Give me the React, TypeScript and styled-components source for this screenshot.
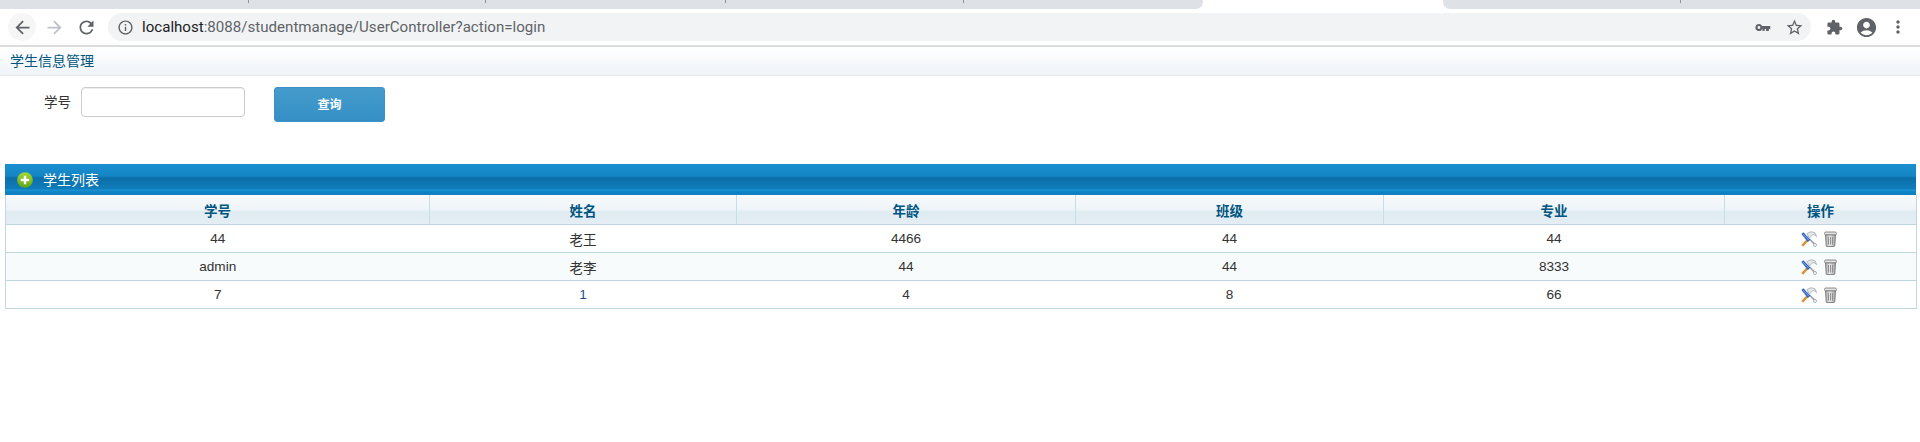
import React from 'react';
import styled, { createGlobalStyle } from 'styled-components';
import {
    MdArrowBack,
    MdArrowForward,
    MdRefresh,
    MdInfoOutline,
    MdStarBorder,
    MdExtension,
    MdAccountCircle,
    MdMoreVert,
} from 'react-icons/md';

const GlobalStyle = createGlobalStyle`
    html, body { margin: 0; padding: 0; background: #fff; }
    body { font-family: "Liberation Sans", Arial, "Noto Sans CJK SC", sans-serif; font-size: 13px; color: #333; }
`;

const TabStrip = styled.div`
    display: flex;
    justify-content: space-between;
    height: 9px;
    background: #fff;
`;

const TabGroup = styled.div<{ $w: number; $side: 'left' | 'right' }>`
    width: ${p => p.$w}px;
    display: flex;
    background: #dee1e6;
    border-radius: ${p => (p.$side === 'left' ? '0 0 7px 0' : '0 0 0 7px')};
`;

const TabSlot = styled.div<{ $w: number }>`
    width: ${p => p.$w}px;
    flex: none;
    height: 3px;
    box-sizing: border-box;
    border-right: 1px solid #8f9296;
`;

const Toolbar = styled.div`
    display: flex;
    align-items: center;
    height: 36px;
    padding: 0 6px 0 8px;
    border-bottom: 2px solid #dadce0;
    background: #fff;
`;

const NavButton = styled.div<{ $hover?: boolean; $off?: boolean }>`
    width: 28px;
    height: 28px;
    display: flex;
    align-items: center;
    justify-content: center;
    flex: none;
    border-radius: 50%;
    margin-right: 4px;
    color: ${p => (p.$off ? '#bdc1c6' : '#5f6368')};
    background: ${p => (p.$hover ? '#f6f6f7' : 'transparent')};
`;

const Omnibox = styled.div`
    flex: 1;
    height: 28px;
    margin: 0 7px 0 4px;
    display: flex;
    align-items: center;
    padding: 0 1px 0 9px;
    background: #f1f3f4;
    border-radius: 14px;
    color: #5f6368;
`;

const Url = styled.div`
    flex: 1;
    margin-left: 8px;
    font-family: Roboto, "Liberation Sans", sans-serif;
    font-size: 15.1px;
    color: #5f6368;
    white-space: nowrap;
`;

const Host = styled.span`
    color: #202124;
`;

const IconSlot = styled.div`
    width: 32px;
    flex: none;
    display: flex;
    align-items: center;
    justify-content: center;
    color: #5f6368;
`;

const Banner = styled.div`
    height: 28px;
    padding-left: 10px;
    line-height: 28px;
    font-size: 14px;
    color: #00557f;
    background: linear-gradient(#ffffff, #eff4f8);
    border-bottom: 1px solid #e3e9ef;
`;

const SearchForm = styled.form`
    display: flex;
    align-items: flex-start;
    height: 88px;
    padding-top: 11px;
    box-sizing: border-box;
    margin: 0;
`;

const FieldLabel = styled.label`
    width: 71px;
    text-align: right;
    line-height: 31px;
    font-size: 13.5px;
    color: #333;
`;

const TextInput = styled.input`
    width: 164px;
    height: 30px;
    box-sizing: border-box;
    margin-left: 10px;
    border: 1px solid #cccccc;
    border-radius: 4px;
    box-shadow: inset 0 1px 1px rgba(0, 0, 0, 0.075);
    background: #fff;
`;

const SearchButton = styled.button`
    width: 111px;
    height: 35px;
    margin-left: 29px;
    padding: 0 0 2px;
    border: 1px solid #3d93c7;
    border-radius: 3px;
    background: linear-gradient(#459ccc, #358fc5);
    color: #fff;
    font-family: inherit;
    font-size: 12px;
    font-weight: bold;
`;

const Panel = styled.div`
    margin: 0 4px 0 5px;
`;

const PanelHeader = styled.div`
    height: 31px;
    display: flex;
    align-items: center;
    padding-left: 12px;
    box-sizing: border-box;
    color: #fff;
    font-size: 14px;
    background: linear-gradient(#1b90d0 0, #1585c4 12px, #0c6fa8 14px, #0f7dbb 25px, #1b94d6 26px, #0f80c2 28px, #0f80c2 100%);
`;

const PanelTitle = styled.span`
    margin: 0 0 2px 10px;
`;

const Table = styled.table`
    width: 100%;
    border-collapse: collapse;
    table-layout: fixed;
    border: 1px solid #c1d8e2;
    border-top: 0;
`;

const HeadCell = styled.th`
    height: 29px;
    padding: 0;
    font-size: 13.5px;
    font-weight: bold;
    color: #00557f;
    background: linear-gradient(#f9fbfd 0, #edf3f7 50%, #e0ebf2 58%, #e3edf3 100%);
    border-left: 1px solid #c9dde6;
    border-bottom: 1px solid #bfd6e0;
    &:first-child { border-left: 0; }
`;

const Row = styled.tr<{ $alt?: boolean }>`
    background: ${p => (p.$alt ? '#f8fbfc' : '#fff')};
`;

const Cell = styled.td<{ $link?: boolean }>`
    height: 27px;
    padding: 0;
    text-align: center;
    font-size: 13.6px;
    color: ${p => (p.$link ? '#1f4f86' : '#333')};
    border-bottom: 1px solid #bfd6e0;
`;

const ActionIcons = styled.div`
    display: flex;
    justify-content: center;
    align-items: center;
    gap: 7px;
    padding-right: 3px;
`;

const KeyIcon = () => (
    <svg width="17" height="17" viewBox="0 0 24 24">
        <path fill="#5f6368" fillRule="evenodd" d="M7 7a5 5 0 0 1 4.6 3H23v4h-2v3h-4v-3h-2v3h-3v-3h-.4A5 5 0 1 1 7 7zm0 3a2 2 0 1 0 0 4 2 2 0 0 0 0-4z" />
    </svg>
);

const PlusBadge = () => (
    <svg width="16" height="16" viewBox="0 0 16 16">
        <defs>
            <linearGradient id="plus-green" x1="0" y1="0" x2="0" y2="1">
                <stop offset="0" stopColor="#a6d832" />
                <stop offset="1" stopColor="#5ea514" />
            </linearGradient>
        </defs>
        <circle cx="8" cy="8" r="7.8" fill="url(#plus-green)" />
        <path d="M6.8 3.8h2.4v3h3v2.4h-3v3H6.8v-3h-3V6.8h3z" fill="#fff" />
    </svg>
);

const ToolsIcon = () => (
    <svg width="16" height="16" viewBox="0 0 16 16">
        <path d="M8.5 8l5.5 5.7" stroke="#a2a6aa" strokeWidth="1.8" />
        <circle cx="14" cy="14" r="1.5" fill="#fff" stroke="#9aa0a6" strokeWidth=".8" />
        <path d="M6 2.5L10 .7l4 1 1.6 3.8-2.6-2-2 .6-2.6 3z" fill="#e6e7e8" stroke="#8f9398" strokeWidth=".6" />
        <path d="M1.2 14.8l5.6-6" stroke="#d8963c" strokeWidth="2.6" />
        <path d="M.4 3L2.4 1.2l7 7.5L6.8 11z" fill="#2f62c4" />
        <path d="M2 3l5.6 6" stroke="#8fb0ea" strokeWidth=".9" />
    </svg>
);

const TrashIcon = () => (
    <svg width="13" height="16" viewBox="0 0 13 16">
        <defs>
            <linearGradient id="trash-grey" x1="0" y1="0" x2="1" y2="0">
                <stop offset="0" stopColor="#a3a3a3" />
                <stop offset=".45" stopColor="#ececec" />
                <stop offset="1" stopColor="#9a9a9a" />
            </linearGradient>
        </defs>
        <rect x=".5" y="1" width="12" height="3" rx="1.4" fill="#e3e3e3" stroke="#7d7d7d" strokeWidth=".9" />
        <path d="M1.5 4h10l-.7 10.8a.8.8 0 0 1-.8.7H3a.8.8 0 0 1-.8-.7z" fill="url(#trash-grey)" stroke="#7d7d7d" strokeWidth=".9" />
        <path d="M4.5 6v7.5M6.5 6v7.5M8.5 6v7.5" stroke="#8a8a8a" strokeWidth=".9" />
    </svg>
);

const columns = [
    { title: '学号', width: 424 },
    { title: '姓名', width: 307 },
    { title: '年龄', width: 339 },
    { title: '班级', width: 308 },
    { title: '专业', width: 341 },
    { title: '操作', width: 192 },
];

const students = [
    { id: '44', name: '老王', age: '4466', clazz: '44', major: '44' },
    { id: 'admin', name: '老李', age: '44', clazz: '44', major: '8333' },
    { id: '7', name: '1', age: '4', clazz: '8', major: '66', link: true },
];

const App = () => (
    <>
        <GlobalStyle />
        <TabStrip>
            <TabGroup $w={1203} $side="left">
                <TabSlot $w={249} />
                <TabSlot $w={237} />
                <TabSlot $w={240} />
                <TabSlot $w={238} />
            </TabGroup>
            <TabGroup $w={477} $side="right">
                <TabSlot $w={238} />
            </TabGroup>
        </TabStrip>
        <Toolbar>
            <NavButton $hover><MdArrowBack size={21} /></NavButton>
            <NavButton $off><MdArrowForward size={21} /></NavButton>
            <NavButton><MdRefresh size={21} /></NavButton>
            <Omnibox>
                <MdInfoOutline size={17} />
                <Url><Host>localhost</Host>:8088/studentmanage/UserController?action=login</Url>
                <IconSlot><KeyIcon /></IconSlot>
                <IconSlot><MdStarBorder size={19} /></IconSlot>
            </Omnibox>
            <IconSlot><MdExtension size={17} /></IconSlot>
            <IconSlot><MdAccountCircle size={23} /></IconSlot>
            <IconSlot><MdMoreVert size={20} /></IconSlot>
        </Toolbar>
        <Banner>学生信息管理</Banner>
        <SearchForm>
            <FieldLabel>学号</FieldLabel>
            <TextInput />
            <SearchButton type="button">查询</SearchButton>
        </SearchForm>
        <Panel>
            <PanelHeader>
                <PlusBadge />
                <PanelTitle>学生列表</PanelTitle>
            </PanelHeader>
            <Table>
                <colgroup>
                    {columns.map(c => <col key={c.title} width={c.width} />)}
                </colgroup>
                <thead>
                    <tr>{columns.map(c => <HeadCell key={c.title}>{c.title}</HeadCell>)}</tr>
                </thead>
                <tbody>
                    {students.map((s, i) => (
                        <Row key={s.id} $alt={i === 1}>
                            <Cell>{s.id}</Cell>
                            <Cell $link={s.link}>{s.name}</Cell>
                            <Cell>{s.age}</Cell>
                            <Cell>{s.clazz}</Cell>
                            <Cell>{s.major}</Cell>
                            <Cell><ActionIcons><ToolsIcon /><TrashIcon /></ActionIcons></Cell>
                        </Row>
                    ))}
                </tbody>
            </Table>
        </Panel>
    </>
);

export default App;
